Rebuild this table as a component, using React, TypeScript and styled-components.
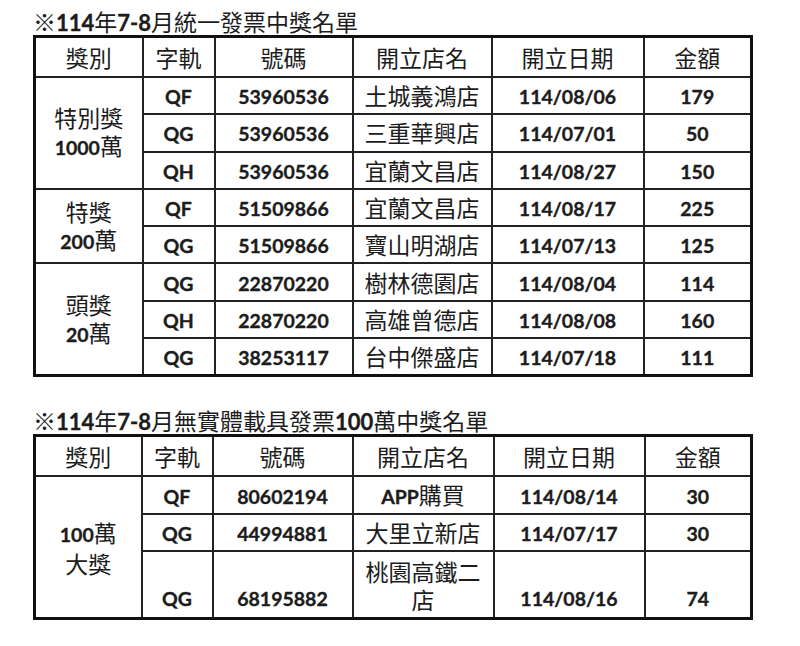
import React from "react";
import styled, { createGlobalStyle } from "styled-components";

const GlobalStyle = createGlobalStyle`
	html, body {
		margin: 0;
		padding: 0;
		background: #fff;
	}
	body {
		font-family: "Noto Sans CJK TC", "Noto Sans CJK SC", sans-serif;
		color: #1c1c1c;
	}
`;

const Page = styled.div`
	padding: 7px 0 0 33px;
	width: 720px;
`;

interface TitleProps {
	gap: number;
}

const Title = styled.div<TitleProps>`
	margin-top: ${(props) => props.gap}px;
	font-size: 23px;
	line-height: 28px;
	height: 28px;
	white-space: nowrap;
`;

const Latin = styled.span`
	font-family: "Lato", "Liberation Sans", sans-serif;
	font-weight: 700;
	font-size: 19.5px;
	-webkit-text-stroke: 0.35px #1c1c1c;
`;

const TitleLatin = styled(Latin)`
	font-size: 22px;
`;

const Table = styled.table`
	border-collapse: collapse;
	table-layout: fixed;
	width: 719px;
	border: 3px solid #111;
`;

const HeadCell = styled.th`
	border: 2px solid #222;
	font-weight: 400;
	font-size: 23px;
	height: 38px;
	padding: 0;
	text-align: center;
	vertical-align: middle;
	line-height: 30px;
`;

interface CellProps {
	tall?: boolean;
}

const Cell = styled.td<CellProps>`
	border: 2px solid #222;
	font-size: 23px;
	height: ${(props) => (props.tall ? 61 : 35.3)}px;
	padding: 0 0 ${(props) => (props.tall ? 4 : 0)}px;
	text-align: center;
	vertical-align: ${(props) => (props.tall ? "bottom" : "middle")};
	line-height: ${(props) => (props.tall ? 28 : 29)}px;
`;

const GroupCell = styled(Cell)`
	line-height: 28px;
	vertical-align: middle;
	padding: 0;
`;

// split text into latin (bold) and CJK runs
function Mixed({ text, title }: { text: string; title?: boolean }) {
	const parts = text.split(/([A-Za-z0-9\-\/]+)/).filter((p) => p !== "");
	return (
		<>
			{parts.map((p, i) => {
				if (/^[A-Za-z0-9\-\/]+$/.test(p)) {
					return title ? <TitleLatin key={i}>{p}</TitleLatin> : <Latin key={i}>{p}</Latin>;
				}
				return <React.Fragment key={i}>{p}</React.Fragment>;
			})}
		</>
	);
}

interface Row {
	track: string;
	number: string;
	store: string;
	date: string;
	amount: string;
	tall?: boolean;
}

interface Group {
	label: string[];
	rows: Row[];
}

const HEADERS = ["獎別", "字軌", "號碼", "開立店名", "開立日期", "金額"];

const TABLE_ONE: Group[] = [
	{
		label: ["特別獎", "1000萬"],
		rows: [
			{ track: "QF", number: "53960536", store: "土城義鴻店", date: "114/08/06", amount: "179" },
			{ track: "QG", number: "53960536", store: "三重華興店", date: "114/07/01", amount: "50" },
			{ track: "QH", number: "53960536", store: "宜蘭文昌店", date: "114/08/27", amount: "150" },
		],
	},
	{
		label: ["特獎", "200萬"],
		rows: [
			{ track: "QF", number: "51509866", store: "宜蘭文昌店", date: "114/08/17", amount: "225" },
			{ track: "QG", number: "51509866", store: "寶山明湖店", date: "114/07/13", amount: "125" },
		],
	},
	{
		label: ["頭獎", "20萬"],
		rows: [
			{ track: "QG", number: "22870220", store: "樹林德園店", date: "114/08/04", amount: "114" },
			{ track: "QH", number: "22870220", store: "高雄曾德店", date: "114/08/08", amount: "160" },
			{ track: "QG", number: "38253117", store: "台中傑盛店", date: "114/07/18", amount: "111" },
		],
	},
];

const TABLE_TWO: Group[] = [
	{
		label: ["100萬", "大獎"],
		rows: [
			{ track: "QF", number: "80602194", store: "APP購買", date: "114/08/14", amount: "30" },
			{ track: "QG", number: "44994881", store: "大里立新店", date: "114/07/17", amount: "30" },
			{ track: "QG", number: "68195882", store: "桃園高鐵二\n店", date: "114/08/16", amount: "74", tall: true },
		],
	},
];

function PrizeTable({ groups, widths }: { groups: Group[]; widths: number[] }) {
	return (
		<Table>
			<colgroup>
				{widths.map((w, i) => (
					<col key={i} style={{ width: w }} />
				))}
			</colgroup>
			<thead>
				<tr>
					{HEADERS.map((h) => (
						<HeadCell key={h}>{h}</HeadCell>
					))}
				</tr>
			</thead>
			<tbody>
				{groups.map((g) =>
					g.rows.map((r, i) => (
						<tr key={g.label.join() + i}>
							{i === 0 && (
								<GroupCell rowSpan={g.rows.length}>
									{g.label.map((l, j) => (
										<div key={j}>
											<Mixed text={l} />
										</div>
									))}
								</GroupCell>
							)}
							<Cell tall={r.tall}><Latin>{r.track}</Latin></Cell>
							<Cell tall={r.tall}><Latin>{r.number}</Latin></Cell>
							<Cell tall={r.tall}>
								{r.store.split("\n").map((line, j) => (
									<div key={j}>
										<Mixed text={line} />
									</div>
								))}
							</Cell>
							<Cell tall={r.tall}><Latin>{r.date}</Latin></Cell>
							<Cell tall={r.tall}><Latin>{r.amount}</Latin></Cell>
						</tr>
					))
				)}
			</tbody>
		</Table>
	);
}

export default function App() {
	return (
		<Page>
			<GlobalStyle />
			<Title gap={0}>
				<Mixed text="※114年7-8月統一發票中獎名單" title />
			</Title>
			<PrizeTable groups={TABLE_ONE} widths={[108, 72, 138, 139, 152, 108]} />
			<Title gap={29}>
				<Mixed text="※114年7-8月無實體載具發票100萬中獎名單" title />
			</Title>
			<PrizeTable groups={TABLE_TWO} widths={[107, 71, 140, 141, 151, 107]} />
		</Page>
	);
}
